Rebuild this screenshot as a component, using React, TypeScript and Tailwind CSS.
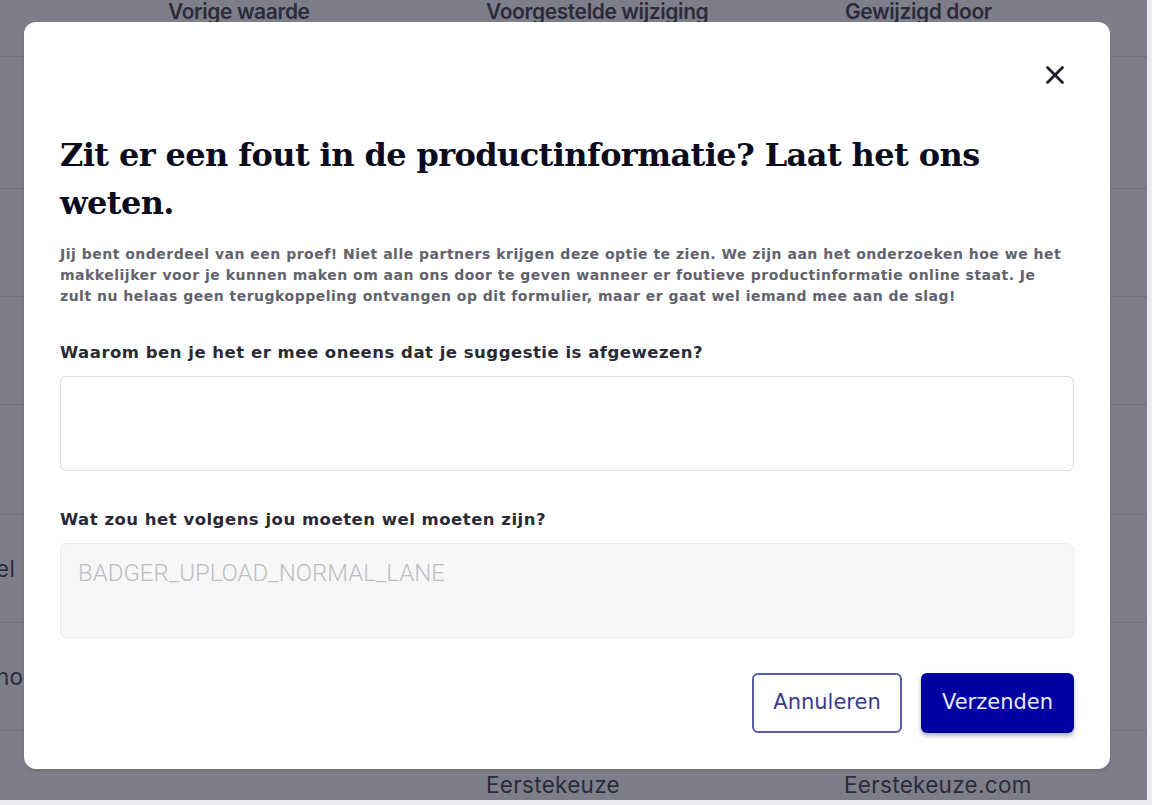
import { X } from "lucide-react";

const rows = [
  { h: "h-[132px]", left: "", next: "", by: "" },
  { h: "h-[108px]", left: "", next: "", by: "" },
  { h: "h-[108px]", left: "", next: "", by: "" },
  { h: "h-[110px]", left: "", next: "", by: "" },
  { h: "h-[108px]", left: "el", next: "", by: "" },
  { h: "h-[108px]", left: "nol", next: "", by: "" },
  { h: "h-[108px]", left: "", next: "Eerstekeuze", by: "Eerstekeuze.com" },
];

function Table() {
  return (
    <div className="w-[1147px] h-[800px] overflow-hidden bg-[#7e7e8b] text-[#2b2b3a] font-['Inter',sans-serif]">
      <div className="flex h-[57px] items-start pt-[1px] border-b border-[#72727e] text-[21px] font-semibold tracking-[-0.4px] leading-[22px]">
        <div className="w-[168px]" />
        <div className="w-[318px]">Vorige waarde</div>
        <div className="w-[359px]">Voorgestelde wijziging</div>
        <div>Gewijzigd door</div>
      </div>
      {rows.map((r, i) => (
        <div key={i} className={`flex items-center border-b border-[#72727e] text-[22.5px] leading-[26px] tracking-[0.3px] ${r.h}`}>
          <div className="w-[168px] -ml-[4px]">{r.left}</div>
          <div className="w-[318px]" />
          <div className="w-[359px] pl-[4px]">{r.next}</div>
          <div className="pl-[3px]">{r.by}</div>
        </div>
      ))}
    </div>
  );
}

export default function App() {
  return (
    <div className="relative w-[1152px] h-[805px] bg-[#ececf0] overflow-hidden">
      <Table />
      <div className="absolute left-[24px] top-[22px] w-[1086px] h-[747px] rounded-[12px] bg-white shadow-[0_2px_3px_rgba(0,0,0,0.12)] px-[36px] pt-[38px]">
        <div className="flex justify-end pr-[4px]">
          <button type="button" className="text-[#1d1d2b]">
            <X size={30} strokeWidth={2.2} />
          </button>
        </div>
        <h1 className="mt-[41px] font-['DejaVu_Serif',serif] font-bold text-[32px] leading-[48px] tracking-[-0.6px] text-[#0b0b1e] w-[960px]">
          Zit er een fout in de productinformatie? Laat het ons weten.
        </h1>
        <p className="mt-[17px] font-['DejaVu_Sans',sans-serif] font-bold text-[14px] leading-[21px] tracking-[0.5px] text-[#62626c] whitespace-nowrap">
          Jij bent onderdeel van een proef! Niet alle partners krijgen deze optie te zien. We zijn aan het onderzoeken hoe we het
          <br />
          makkelijker voor je kunnen maken om aan ons door te geven wanneer er foutieve productinformatie online staat. Je
          <br />
          zult nu helaas geen terugkoppeling ontvangen op dit formulier, maar er gaat wel iemand mee aan de slag!
        </p>
        <label className="block mt-[34px] font-['DejaVu_Sans',sans-serif] font-bold text-[16.5px] leading-[24px] tracking-[0.5px] text-[#2a2a36]">
          Waarom ben je het er mee oneens dat je suggestie is afgewezen?
        </label>
        <textarea className="mt-[11px] block w-[1014px] h-[95px] resize-none rounded-[6px] border border-[#dcdce0] bg-white outline-none" />
        <label className="block mt-[37px] font-['DejaVu_Sans',sans-serif] font-bold text-[16.5px] leading-[24px] tracking-[0.5px] text-[#2a2a36]">
          Wat zou het volgens jou moeten wel moeten zijn?
        </label>
        <div className="mt-[11px] w-[1014px] h-[95px] rounded-[6px] border border-[#ececee] bg-[#f7f7f8] px-[17px] pt-[15px] font-['Roboto',sans-serif] font-light text-[24px] leading-[28px] text-[#bdbdc3]">
          BADGER_UPLOAD_NORMAL_LANE
        </div>
        <div className="mt-[35px] flex justify-end gap-[19px] w-[1014px]">
          <button type="button" className="w-[150px] h-[60px] rounded-[6px] border-2 border-[#5b5ba6] bg-white font-['DejaVu_Sans',sans-serif] text-[21px] text-[#3a3a8c]">
            Annuleren
          </button>
          <button type="button" className="w-[153px] h-[60px] rounded-[6px] bg-[#0000a0] shadow-[0_3px_4px_rgba(0,0,80,0.3)] font-['DejaVu_Sans',sans-serif] text-[21px] text-[#e8e8ff]">
            Verzenden
          </button>
        </div>
      </div>
    </div>
  );
}
